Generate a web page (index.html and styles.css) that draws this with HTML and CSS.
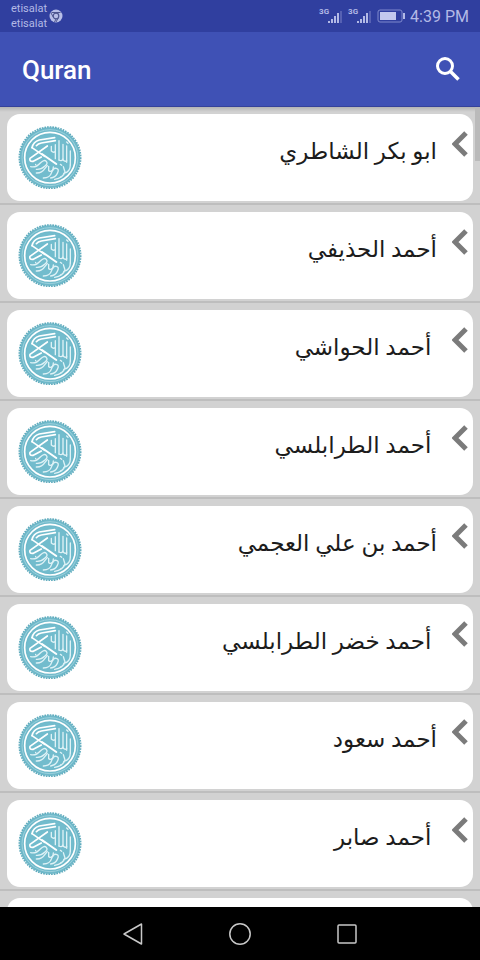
FILE: index.html
```html
<!DOCTYPE html>
<html lang="ar">
<head>
    <meta charset="UTF-8">
    <meta name="viewport" content="width=device-width, initial-scale=1.0">
    <title>Quran</title>
    <link rel="stylesheet" href="styles.css">
</head>
<body>
    <!-- shared icons -->
    <svg class="sprites" width="0" height="0" aria-hidden="true">
        <symbol id="signal" viewBox="0 0 24 16">
            <path d="M9 13h2v2h-2zM12 11h2v4h-2zM15 8h2v7h-2zM18 5h2v10h-2z" fill="#b3bae6"/>
            <path d="M21 3h2v12h-2z" fill="#5661b3"/>
        </symbol>
        <symbol id="chevron" viewBox="0 0 16 26">
            <path d="M14 2L3 13l11 11" fill="none" stroke="#7b7b7b" stroke-width="5"/>
        </symbol>
        <symbol id="seal" viewBox="12 14 192 192">
            <circle cx="108" cy="112" r="91" fill="#6fb9ca"/>
            <circle cx="108" cy="112" r="92" fill="none" stroke="#5fabbd" stroke-width="5" stroke-dasharray="5 3"/>
            <circle cx="108" cy="112" r="84" fill="none" stroke="#9bd0dc" stroke-width="3"/>
            <circle cx="108" cy="112" r="76" fill="none" stroke="#fff" stroke-width="5"/>
            <circle cx="108" cy="112" r="70" fill="#72bccd"/>
            <g fill="none" stroke="#dff2f6" stroke-width="4" stroke-linecap="round" stroke-linejoin="round">
                <path d="M124 73v42M135 61v58M147 72v47M158 77v49M169 92v42"/>
                <path d="M112 78v14q6 6 12 2M135 119q8 5 12-3M147 119q6 6 11 2"/>
                <path d="M50 139q16 4 29-11 12-12 18-5t-5 15q-10 10-25 9"/>
                <path d="M67 158q16 1 26-14l7-8M104 138v13q7 5 13-2l1-9"/>
                <path d="M88 173q20 0 25-17 4-14 14-12t3 15q-6 12-20 14"/>
                <path d="M122 177q25-4 31-22l-5-16M169 134q0 21-20 25"/>
                <path d="M65 132v1M139 132l4 3M140 170v1M158 65l4 4"/>
            </g>
            <g fill="none" stroke="#fff" stroke-width="5" stroke-linecap="round" stroke-linejoin="round">
                <path d="M54 82Q58 64 76 59L122 52M67 76Q72 70 82 68L124 61"/>
                <path d="M100 77L48 114Q45 125 58 123L82 110"/>
                <path d="M54 82L92 108" stroke-width="5"/>
                <path d="M84 101L127 131" stroke-width="6"/>
            </g>
        </symbol>
    </svg>

    <div class="status-bar">
        <div class="carriers">
            <span>etisalat</span>
            <span>etisalat</span>
        </div>
        <svg class="chrome-icon" viewBox="0 0 14 14" aria-hidden="true">
            <circle cx="7" cy="7" r="6.500" fill="#b8bfe8"/>
            <circle cx="7" cy="7" r="2.800" fill="#b8bfe8" stroke="#4e568f" stroke-width="1.200"/>
            <path d="M2.500 3.500h9M4.500 8.500L2 4M7 10l-1.500 3M9.500 8.500L7 13" fill="none" stroke="#4e568f"/>
        </svg>
        <div class="status-right">
            <div class="signal">
                <span>3G</span>
                <svg aria-hidden="true"><use href="#signal"/></svg>
            </div>
            <div class="signal">
                <span>3G</span>
                <svg aria-hidden="true"><use href="#signal"/></svg>
            </div>
            <svg class="battery-icon" viewBox="0 0 28 14" aria-hidden="true">
                <rect x="1" y="1" width="24" height="12" rx="2" fill="none" stroke="#7f89cc"/>
                <path d="M3 3h16v8h-16z" fill="#c3c9ee"/>
                <path d="M26 4h2v6h-2z" fill="#b3bae6"/>
            </svg>
            <span class="clock">4:39 PM</span>
        </div>
    </div>

    <header class="toolbar">
        <h1>Quran</h1>
        <button class="search" type="button" aria-label="Search">
            <svg viewBox="0 0 24 24" aria-hidden="true">
                <circle cx="9" cy="9" r="7.500" fill="none" stroke="#fff" stroke-width="3"/>
                <path d="M14.500 14.500L22.500 22.500" stroke="#fff" stroke-width="3.600"/>
            </svg>
        </button>
    </header>

    <main class="content">
        <ul class="list">
            <li><a class="card" href="#">
                <svg class="seal" aria-hidden="true"><use href="#seal"/></svg>
                <span class="name" dir="rtl">ابو بكر الشاطري</span>
                <svg class="chevron" aria-hidden="true"><use href="#chevron"/></svg>
            </a></li>
            <li><a class="card" href="#">
                <svg class="seal" aria-hidden="true"><use href="#seal"/></svg>
                <span class="name" dir="rtl">أحمد الحذيفي</span>
                <svg class="chevron" aria-hidden="true"><use href="#chevron"/></svg>
            </a></li>
            <li><a class="card" href="#">
                <svg class="seal" aria-hidden="true"><use href="#seal"/></svg>
                <span class="name" dir="rtl">&nbsp;أحمد الحواشي</span>
                <svg class="chevron" aria-hidden="true"><use href="#chevron"/></svg>
            </a></li>
            <li><a class="card" href="#">
                <svg class="seal" aria-hidden="true"><use href="#seal"/></svg>
                <span class="name" dir="rtl">&nbsp;أحمد الطرابلسي</span>
                <svg class="chevron" aria-hidden="true"><use href="#chevron"/></svg>
            </a></li>
            <li><a class="card" href="#">
                <svg class="seal" aria-hidden="true"><use href="#seal"/></svg>
                <span class="name" dir="rtl">أحمد بن علي العجمي</span>
                <svg class="chevron" aria-hidden="true"><use href="#chevron"/></svg>
            </a></li>
            <li><a class="card" href="#">
                <svg class="seal" aria-hidden="true"><use href="#seal"/></svg>
                <span class="name" dir="rtl">&nbsp;أحمد خضر الطرابلسي</span>
                <svg class="chevron" aria-hidden="true"><use href="#chevron"/></svg>
            </a></li>
            <li><a class="card" href="#">
                <svg class="seal" aria-hidden="true"><use href="#seal"/></svg>
                <span class="name" dir="rtl">أحمد سعود</span>
                <svg class="chevron" aria-hidden="true"><use href="#chevron"/></svg>
            </a></li>
            <li><a class="card" href="#">
                <svg class="seal" aria-hidden="true"><use href="#seal"/></svg>
                <span class="name" dir="rtl">&nbsp;أحمد صابر</span>
                <svg class="chevron" aria-hidden="true"><use href="#chevron"/></svg>
            </a></li>
            <li><div class="card"></div></li>
        </ul>
        <div class="scroll-thumb"></div>
    </main>

    <nav class="nav-bar">
        <button type="button" aria-label="Back">
            <svg viewBox="0 0 24 24" aria-hidden="true"><path d="M20.500 2v20L3 12z"/></svg>
        </button>
        <button type="button" aria-label="Home">
            <svg viewBox="0 0 24 24" aria-hidden="true"><circle cx="12" cy="12" r="10.200"/></svg>
        </button>
        <button type="button" aria-label="Recent apps">
            <svg viewBox="0 0 24 24" aria-hidden="true"><rect x="3" y="3" width="18" height="18" rx="1"/></svg>
        </button>
    </nav>
</body>
</html>
```
FILE: styles.css
```css
* {
    box-sizing: border-box;
}
body {
    margin: 0;
    height: 100vh;
    display: flex;
    flex-direction: column;
    background: #d2d2d2;
    font-family: Roboto, "Noto Sans", "DejaVu Sans", sans-serif;
}
button {
    padding: 0;
    border: 0;
    background: none;
    cursor: pointer;
}
svg {
    display: block;
    flex: none;
}
.sprites {
    position: absolute;
}
.status-bar {
    display: flex;
    align-items: center;
    flex: none;
    height: 32px;
    padding: 0 11px;
    background: #303f9f;
    color: #b3bae6;
}
.carriers {
    display: flex;
    flex-direction: column;
    font-size: 11px;
    line-height: 15px;
}
.chrome-icon {
    width: 14px;
    height: 14px;
    margin-left: 2px;
}
.status-right {
    display: flex;
    align-items: center;
    gap: 5px;
    margin-left: auto;
}
.signal {
    display: flex;
    align-items: flex-start;
    width: 24px;
}
.signal span {
    width: 9px;
    font-size: 8px;
    font-weight: 700;
    line-height: 8px;
}
.signal svg {
    width: 24px;
    height: 16px;
    margin-left: -9px;
}
.battery-icon {
    width: 28px;
    height: 14px;
}
.clock {
    font-size: 16px;
}
.toolbar {
    display: flex;
    align-items: center;
    justify-content: space-between;
    flex: none;
    height: 75px;
    padding: 0 20px 0 22px;
    border-bottom: 1px solid #35429a;
    background: #3f51b5;
    color: #fff;
}
.toolbar h1 {
    margin: 0;
    padding-top: 2px;
    font-size: 26px;
    font-weight: 500;
}
.search svg {
    width: 24px;
    height: 24px;
}
.content {
    position: relative;
    flex: 1;
    min-height: 0;
    overflow: hidden;
    background: linear-gradient(#b4b4b4, #d2d2d2 5px);
}
.list {
    margin: 0;
    padding: 0;
    list-style: none;
}
.list li {
    height: 98px;
    padding: 7px 7px 2px;
    border-bottom: 2px solid #bebebe;
}
.card {
    display: flex;
    align-items: flex-start;
    height: 87px;
    padding: 11px 5px 0 11px;
    border-radius: 13px;
    background: #fff;
    color: #1c1c1c;
    text-decoration: none;
}
.seal {
    width: 64px;
    height: 64px;
}
.name {
    flex: 1;
    padding: 7px 15px 0 0;
    font-size: 23px;
    line-height: 40px;
}
.chevron {
    width: 16px;
    height: 26px;
    margin-top: 6px;
}
.scroll-thumb {
    position: absolute;
    top: 0;
    right: 0;
    width: 5px;
    height: 54px;
    background: #bababa;
}
.nav-bar {
    display: flex;
    align-items: center;
    justify-content: center;
    gap: 83px;
    flex: none;
    height: 53px;
    background: #000;
}
.nav-bar svg {
    width: 24px;
    height: 24px;
    fill: none;
    stroke: #c8c8c8;
    stroke-width: 1.500;
    stroke-linejoin: round;
}
```
